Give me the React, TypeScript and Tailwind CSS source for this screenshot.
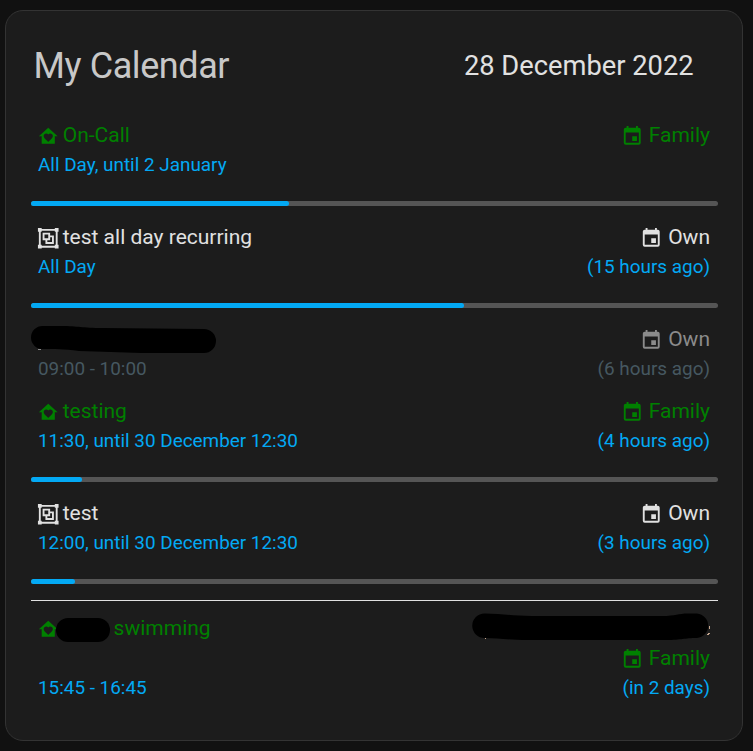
import type { ReactNode } from "react";

const HOME =
  "M12 3L2 12H5V20H19V12H22L12 3M12 18L11.3 17.35C8.8 15.1 7.1 13.6 7.1 11.7C7.1 10.15 8.3 9 9.85 9C10.7 9 11.5 9.4 12 10.05C12.5 9.4 13.3 9 14.15 9C15.7 9 16.9 10.15 16.9 11.7C16.9 13.6 15.2 15.1 12.7 17.35L12 18Z";
const GROUP =
  "M1,1V5H2V19H1V23H5V22H19V23H23V19H22V5H23V1H19V2H5V1M5,4H19V5H20V19H19V20H5V19H4V5H5M6,6V14H9V18H18V9H14V6M8,8H12V12H8M14,11H16V16H11V14H14";
const CALENDAR =
  "M19,19H5V8H19M16,1V3H8V1H6V3H5C3.89,3 3,3.89 3,5V19A2,2 0 0,0 5,21H19A2,2 0 0,0 21,19V5C21,3.89 20.1,3 19,3H18V1M17,12H12V17H17V12Z";

function Icon({ d }: { d: string }) {
  return (
    <svg viewBox="0 0 24 24" className="mt-[1.5px] size-[22.5px] shrink-0" fill="currentColor" fillRule="evenodd">
      <path d={d} />
    </svg>
  );
}

function Source({ name }: { name: string }) {
  return (
    <div className={`flex h-[30px] items-center ${name === "Own" ? "gap-[5.7px]" : "gap-[5px]"}`}>
      <Icon d={CALENDAR} />
      <span>{name}</span>
    </div>
  );
}

type EventProps = {
  icon?: string;
  title?: ReactNode;
  time: string;
  source: string;
  ago?: string;
  color: string;
  sourceColor?: string;
  timeColor?: string;
};

function Event({ icon, title, time, source, ago, color, sourceColor, timeColor = "text-[#03a9f4]" }: EventProps) {
  return (
    <div className="flex h-[60px] justify-between pr-2 pl-[5.6px] text-[21px] leading-[30px]">
      <div>
        <div className={`flex h-[30px] items-center gap-[3.6px] ${color}`}>
          {icon && <Icon d={icon} />}
          {title}
        </div>
        <div className={`pl-[1.4px] text-[18.9px] leading-[29px] ${timeColor}`}>{time}</div>
      </div>
      <div className="flex flex-col items-end">
        <div className={sourceColor ?? color}>
          <Source name={source} />
        </div>
        <div className={`text-[18.9px] leading-[29px] ${timeColor}`}>{ago}</div>
      </div>
    </div>
  );
}

function Progress({ value }: { value: number }) {
  return (
    <div className="mt-[21px] mb-4 h-[5px] overflow-hidden rounded-full bg-[#555555]">
      <div className="h-full rounded-r-full bg-[#03a9f4]" style={{ width: `${value}%` }} />
    </div>
  );
}

const GREEN = "text-[#008000]";
const WHITE = "text-[#e1e1e1]";

export default function App() {
  return (
    <div className="h-[751px] w-[753px] bg-[#111111] pt-[10px] pl-[5px] font-['Roboto',sans-serif]">
      <div className="h-[731px] w-[738px] rounded-[18px] border border-[#333333] bg-[#1c1c1c] pr-6 pl-[25px]">
        <div className="flex h-[109px] items-start justify-between pt-[31px] pr-[24.4px] pl-[2.6px]">
          <h1 className="text-[36px] leading-[48px] tracking-[-0.432px] text-[#c8c8c8]">My Calendar</h1>
          <div className="text-[27.3px] leading-[48px] text-[#e1e1e1]">28 December 2022</div>
        </div>

        <Event icon={HOME} title="On-Call" time="All Day, until 2 January" source="Family" color={GREEN} />
        <Progress value={37.5} />
        <Event icon={GROUP} title="test all day recurring" time="All Day" source="Own" ago="(15 hours ago)" color={WHITE} />
        <Progress value={63} />
        <Event
          title={
            <svg width="186" height="30" viewBox="0 0 186 30" className="-ml-[6px] overflow-visible">
              <path d="M11.5 2H30C48 2 50 4 72 4L173 5A12 12 0 0 1 173 29H110C90 28 70 28 48 27C32 25 24 25 11.5 25A11.5 11.5 0 0 1 11.5 2Z" />
              <path d="M7 25.5h3" stroke="#8b8b8b" />
            </svg>
          }
          time="09:00 - 10:00"
          source="Own"
          ago="(6 hours ago)"
          color="text-black"
          sourceColor="text-[#8b8b8b]"
          timeColor="text-[#465861]"
        />
        <div className="h-3" />
        <Event icon={HOME} title="testing" time="11:30, until 30 December 12:30" source="Family" ago="(4 hours ago)" color={GREEN} />
        <Progress value={7.4} />
        <Event icon={GROUP} title="test" time="12:00, until 30 December 12:30" source="Own" ago="(3 hours ago)" color={WHITE} />
        <Progress value={6.4} />
        <div className="mb-3 h-px bg-[#e1e1e1]" />
        <div className="flex justify-between pr-2 pl-[5.6px] text-[21px] leading-[30px]">
          <div className={GREEN}>
            <div className="flex h-[30px] items-center">
              <Icon d={HOME} />
              <span className="mt-[4px] -ml-[3.4px] h-6 w-[54.5px] rounded-full bg-black" />
              <span className="ml-[3.4px]">swimming</span>
            </div>
            <div className="mt-[30px] pl-[1.4px] text-[18.9px] leading-[29px] text-[#03a9f4]">15:45 - 16:45</div>
          </div>
          <div className={`flex flex-col items-end ${GREEN}`}>
            <svg width="238" height="30" viewBox="0 0 238 30" className="overflow-visible">
              <path
                d="M12.5 0.5C30 0.5 40 3 60 3H190C204 3 206 0.5 216 0.5H225A12.3 12.3 0 0 1 225 25C212 25 210 27 194 27H56C36 27 26 25 12.5 25A12.2 12.2 0 0 1 12.5 0.5Z"
                fill="#000000"
              />
              <path d="M13 25.5h1M237.5 13v3M236 20.5h2M235 21.5h2" stroke="#c8a890" strokeWidth="1" />
            </svg>
            <Source name="Family" />
            <div className="text-[18.9px] leading-[29px] text-[#03a9f4]">(in 2 days)</div>
          </div>
        </div>
      </div>
    </div>
  );
}
